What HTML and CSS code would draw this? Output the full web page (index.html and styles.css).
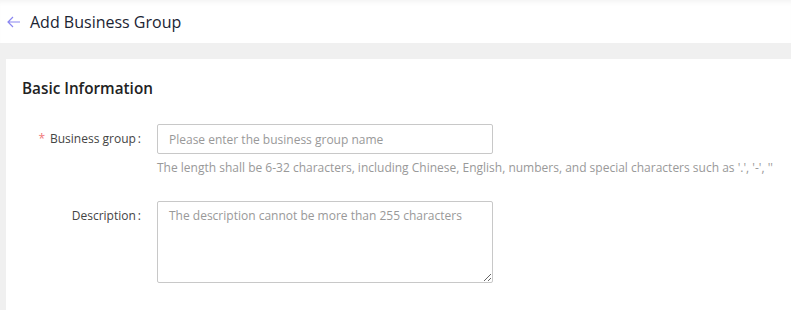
FILE: index.html
```html
<html>
	<head>
	<meta name="viewport" content="width=device-width, initial-scale=1">
	<title>Add Business Group</title>
	<link rel="stylesheet" href="styles.css">
	</head>
	<body>
	<div class="header">
		<span class="back">
			<svg width="14" height="12" viewBox="0 0 14 12"><path d="M6 1 L1 6 L6 11 M1 6 H13" fill="none" stroke="#8a86f0" stroke-width="1.2"/></svg>
		</span>
		<span class="title">Add Business Group</span>
	</div>
	<div class="card">
		<div class="card-title">Basic Information</div>
		<div class="form-item">
			<label class="label"><span class="req">*</span>Business group<span class="colon">:</span></label>
			<div class="field">
				<input class="input" type="text" placeholder="Please enter the business group name">
				<div class="help">The length shall be 6-32 characters, including Chinese, English, numbers, and special characters such as '.', '-', ''</div>
			</div>
		</div>
		<div class="form-item desc">
			<label class="label">Description<span class="colon">:</span></label>
			<div class="field">
				<textarea class="textarea" placeholder="The description cannot be more than 255 characters"></textarea>
			</div>
		</div>
	</div>
	</body>
</html>
```

FILE: styles.css
```css
body{
	margin: 0;
	background-color: #f0f0f0;
	font-family: "Open Sans", "Noto Sans", sans-serif;
	color: #333;
}
.header{
	height: 43px;
	background-color: #fff;
	display: flex;
	align-items: center;
	padding-left: 7px;
	box-shadow: inset 0 5px 5px -3px rgba(0,0,0,0.05);
}
.back{display: flex; align-items: center; width: 23px;}
.title{font-size: 16px; color: #1b2433;}
.card{
	margin: 16px 0 0 6px;
	background-color: #fff;
	padding: 17px 16px 40px;
}
.card-title{
	font-size: 15.3px;
	font-weight: 600;
	color: #222;
	line-height: 24px;
	margin-bottom: 24px;
}
.form-item{display: flex;}
.form-item.desc{margin-top: 24px;}
.label{
	width: 119px;
	text-align: right;
	font-size: 12px;
	line-height: 30px;
	color: #444;
	padding-right: 16px;
}
.req{color: #f07878; margin-right: 5px;}
.colon{margin-left: 2px;}
.field{width: 336px;}
.input, .textarea{
	box-sizing: border-box;
	width: 336px;
	border: 1px solid #c8c8c8;
	border-radius: 2px;
	font-family: "Open Sans", "Noto Sans", sans-serif;
	font-size: 12px;
	color: #333;
	outline: none;
}
.input{height: 30px; padding: 0 11px;}
.textarea{height: 82px; padding: 5px 11px; resize: vertical; line-height: 18px; display: block;}
.input::placeholder, .textarea::placeholder{color: #999;}
.help{
	font-size: 12px;
	color: #999;
	line-height: 18px;
	margin-top: 5px;
	white-space: nowrap;
}
```
